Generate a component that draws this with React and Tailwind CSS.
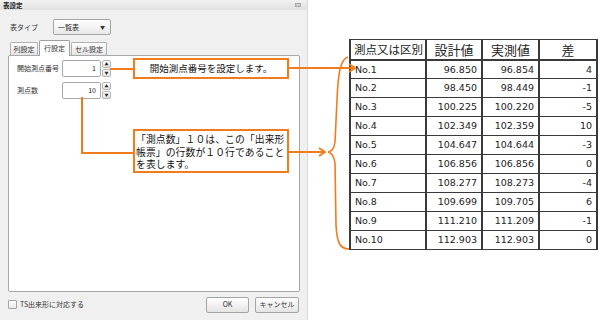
import React from 'react';

const rows = [
  { name: 'No.1', plan: '96.850', real: '96.854', diff: '4' },
  { name: 'No.2', plan: '98.450', real: '98.449', diff: '-1' },
  { name: 'No.3', plan: '100.225', real: '100.220', diff: '-5' },
  { name: 'No.4', plan: '102.349', real: '102.359', diff: '10' },
  { name: 'No.5', plan: '104.647', real: '104.644', diff: '-3' },
  { name: 'No.6', plan: '106.856', real: '106.856', diff: '0' },
  { name: 'No.7', plan: '108.277', real: '108.273', diff: '-4' },
  { name: 'No.8', plan: '109.699', real: '109.705', diff: '6' },
  { name: 'No.9', plan: '111.210', real: '111.209', diff: '-1' },
  { name: 'No.10', plan: '112.903', real: '112.903', diff: '0' }
];

const jp = { fontFamily: '"Noto Sans CJK JP", "Noto Sans", sans-serif' };

const Spinner = () => (
  <div className="flex flex-col ml-[1px] w-[9px] h-[17px] gap-[1px]">
    <div className="flex-1 flex items-center justify-center border border-[#b5b5b5] rounded-[2px] bg-gradient-to-b from-white to-[#e2e2e2] text-[4px] leading-none text-[#222]">▲</div>
    <div className="flex-1 flex items-center justify-center border border-[#b5b5b5] rounded-[2px] bg-gradient-to-b from-white to-[#e2e2e2] text-[4px] leading-none text-[#222]">▼</div>
  </div>
);

const NumberField = ({ label, value }) => (
  <div className="flex items-center h-[17px]">
    <span className="w-[45px] text-[7px] text-[#333]">{label}</span>
    <div className="w-[39px] h-[17px] border border-[#aaa] rounded-[2px] bg-white flex items-center justify-end pr-[4px] text-[7px] text-[#222]">{value}</div>
    <Spinner />
  </div>
);

const Dialog = () => (
  <div className="w-[308px] h-[320px] flex flex-col bg-[#f0f0f0] border-r border-[#d8d8d8]" style={jp}>
    {/* title bar */}
    <div className="h-[10px] flex items-center justify-between px-[3px] bg-gradient-to-b from-[#f2f2f2] to-[#e0e0e0]">
      <span className="text-[6.5px] font-bold text-[#222] leading-none">表設定</span>
      <span className="w-[6px] h-[4px] border border-[#a8a8a8] bg-[#d0d0d0] mr-[3px]" />
    </div>

    {/* type select */}
    <div className="flex items-center mt-[9px] h-[16px]">
      <span className="pl-[10px] w-[53px] text-[7px] text-[#333]">表タイプ</span>
      <div className="w-[58px] h-[16px] border border-[#a5a5a5] rounded-[2px] bg-gradient-to-b from-white to-[#e8e8e8] flex items-center justify-between pl-[4px] pr-[5px]">
        <span className="text-[7px] text-[#222]">一覧表</span>
        <span className="text-[5px] text-[#333]">▼</span>
      </div>
    </div>

    {/* tabs */}
    <div className="flex items-end mt-[4px] ml-[10px] h-[16px]">
      <div className="w-[28px] h-[13px] border border-b-0 border-[#b0b0b0] rounded-t-[2px] bg-gradient-to-b from-white to-[#e4e4e4] flex items-center justify-center text-[7px] text-[#333]">列設定</div>
      <div className="w-[31px] h-[16px] ml-[1px] border border-b-0 border-[#a0a0a0] rounded-t-[2px] bg-white flex items-center justify-center text-[7px] text-[#333] relative top-[1px]">行設定</div>
      <div className="w-[36px] h-[13px] ml-[1px] border border-b-0 border-[#b0b0b0] rounded-t-[2px] bg-gradient-to-b from-white to-[#e4e4e4] flex items-center justify-center text-[7px] text-[#333]">セル設定</div>
    </div>

    {/* tab panel */}
    <div className="ml-[8px] w-[292px] h-[237px] border border-[#a8a8a8] rounded-[2px] bg-white flex flex-col gap-[5px] pt-[4px] pl-[8px]">
      <NumberField label="開始測点番号" value="1" />
      <NumberField label="測点数" value="10" />
    </div>

    {/* footer */}
    <div className="flex items-center mt-[4px] h-[17px] pl-[8px] pr-[8px]">
      <div className="w-[9px] h-[9px] border border-[#a5a5a5] bg-gradient-to-b from-white to-[#e8e8e8] rounded-[1px]" />
      <span className="ml-[3px] text-[7px] text-[#333]">TS出来形に対応する</span>
      <div className="ml-auto flex gap-[6px]">
        <div className="w-[43px] h-[16px] border border-[#a5a5a5] rounded-[2px] bg-gradient-to-b from-white to-[#e4e4e4] flex items-center justify-center text-[7px] text-[#333]">OK</div>
        <div className="w-[44px] h-[16px] border border-[#a5a5a5] rounded-[2px] bg-gradient-to-b from-white to-[#e4e4e4] flex items-center justify-center text-[7px] text-[#333]">キャンセル</div>
      </div>
    </div>
  </div>
);

const DataTable = () => (
  <table className="border-collapse border-l-2 border-t border-[#3a3a3a] text-[#222]">
    <thead>
      <tr className="h-[20px]" style={jp}>
        <th className="w-[76px] border-r-2 border-b-2 border-[#3a3a3a] text-left pl-[3px] font-normal text-[11.5px] leading-none">測点又は区別</th>
        <th className="w-[56px] border-r-2 border-b-2 border-[#3a3a3a] font-normal text-[13px] leading-none">設計値</th>
        <th className="w-[57px] border-r-2 border-b-2 border-[#3a3a3a] font-normal text-[13px] leading-none">実測値</th>
        <th className="w-[58px] border-r-2 border-b-2 border-[#3a3a3a] font-normal text-[13px] leading-none">差</th>
      </tr>
    </thead>
    <tbody style={{ fontFamily: '"DejaVu Sans", Verdana, sans-serif' }}>
      {rows.map(r => (
        <tr key={r.name} className="h-[19px] text-[9.5px] leading-none">
          <td className="border-r-2 border-b border-[#3a3a3a] pl-[4px]">{r.name}</td>
          <td className="border-r-2 border-b border-[#3a3a3a] text-right pr-[4px]">{r.plan}</td>
          <td className="border-r-2 border-b border-[#3a3a3a] text-right pr-[4px]">{r.real}</td>
          <td className="border-r-2 border-b border-[#3a3a3a] text-right pr-[4px]">{r.diff}</td>
        </tr>
      ))}
    </tbody>
  </table>
);

const Annotations = () => (
  <div className="absolute inset-0 pointer-events-none" style={jp}>
    <svg className="absolute inset-0" width="600" height="321" viewBox="0 0 600 321" fill="none" stroke="#f07c1c" strokeWidth="2">
      {/* start number */}
      <path d="M110 69 H133" />
      <path d="M289 68 H353" />
      <path d="M349 64 L355 68 L349 72" strokeLinejoin="round" />
      {/* row count */}
      <path d="M82 97 V153 H133" />
      <path d="M289 152 H324" />
      <path d="M319 148 L325 152 L319 156" strokeLinejoin="round" />
      {/* brace */}
      <path d="M348 57 C340 59 338 75 337 100 L335 142 C334 149 332 151 328 152 C332 153 334 156 335 163 L336 225 C337 243 340 249 349 249" strokeWidth="1.6" />
    </svg>
    <div className="absolute left-[133px] top-[58px] w-[156px] h-[21px] border-2 border-[#f07c1c] bg-white flex items-center justify-center text-[9.5px] text-[#111]">
      開始測点番号を設定します。
    </div>
    <div className="absolute left-[133px] top-[129px] w-[156px] h-[44px] border-2 border-[#f07c1c] bg-white pl-[1px] pt-[2px] text-[9.8px] leading-[12.5px] text-[#111] tracking-[0.1px]">
      <div>「測点数」１０は、この「出来形</div>
      <div>帳票」の行数が１０行であること</div>
      <div>を表します。</div>
    </div>
  </div>
);

export default function App() {
  return (
    <div className="relative w-[600px] h-[321px] bg-white overflow-hidden flex">
      <Dialog />
      <div className="ml-[41px] mt-[39px]">
        <DataTable />
      </div>
      <Annotations />
    </div>
  );
}
